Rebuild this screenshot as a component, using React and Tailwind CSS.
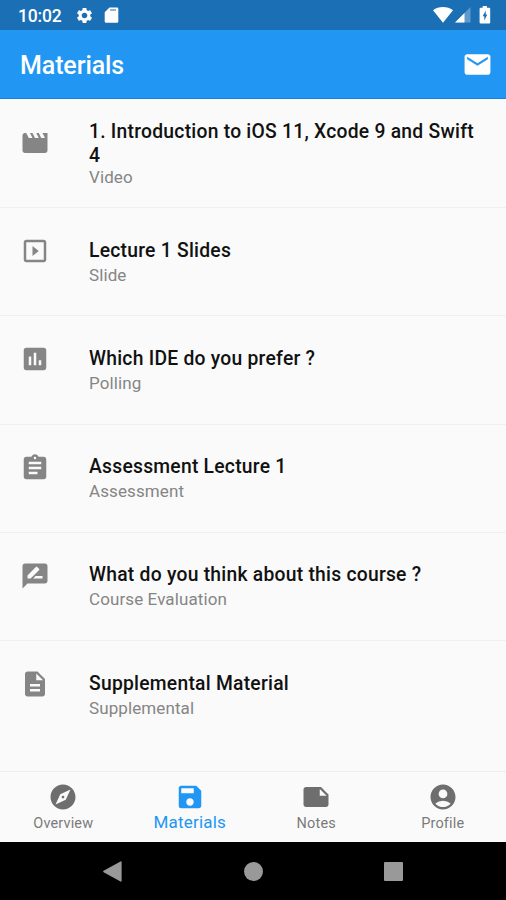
import {
  MdAccountCircle, MdAssignment, MdDescription, MdEmail, MdExplore, MdInsertChart,
  MdMovie, MdNote, MdSave, MdSettings,
} from "react-icons/md";

const SlideIcon = ({ size }) => (
  <svg width={size} height={size} viewBox="0 0 24 24" fill="currentColor">
    <path d="M10 8v8l5-4-5-4zm9-5H5c-1.1 0-2 .9-2 2v14c0 1.1.9 2 2 2h14c1.1 0 2-.9 2-2V5c0-1.1-.9-2-2-2zm0 16H5V5h14v14z" />
  </svg>
);

const ReviewIcon = ({ size }) => (
  <svg width={size} height={size} viewBox="0 0 24 24" fill="currentColor">
    <path d="M20 2H4c-1.1 0-1.99.9-1.99 2L2 22l4-4h14c1.1 0 2-.9 2-2V4c0-1.1-.9-2-2-2zM6 14v-2.47l6.88-6.88c.2-.2.51-.2.71 0l1.77 1.77c.2.2.2.51 0 .71L8.47 14H6zm12 0h-7.5l2-2H18v2z" />
  </svg>
);

const MATERIALS = [
  { title: "1. Introduction to iOS 11, Xcode 9 and Swift 4", type: "Video", icon: MdMovie, twoLine: true },
  { title: "Lecture 1 Slides", type: "Slide", icon: SlideIcon },
  { title: "Which IDE do you prefer ?", type: "Polling", icon: MdInsertChart },
  { title: "Assessment Lecture 1", type: "Assessment", icon: MdAssignment },
  { title: "What do you think about this course ?", type: "Course Evaluation", icon: ReviewIcon },
  { title: "Supplemental Material", type: "Supplemental", icon: MdDescription },
];

const TABS = [
  { label: "Overview", icon: MdExplore },
  { label: "Materials", icon: MdSave, active: true },
  { label: "Notes", icon: MdNote },
  { label: "Profile", icon: MdAccountCircle },
];

function StatusBar() {
  return (
    <div className="flex h-[30px] items-center bg-[#1a6fb5] pl-[18px] pr-[15px] text-white">
      <span className="w-[57px] pt-[3px] text-[17.5px] font-medium leading-none tracking-[-0.2px]">10:02</span>
      <MdSettings size={19} />
      <svg className="ml-[9px]" width="16" height="18" viewBox="0 0 16 18" fill="currentColor">
        <path fillRule="evenodd" d="M6.5 1.5H14q1.3 0 1.3 1.3v12.6q0 1.3-1.3 1.3H3q-1.3 0-1.3-1.3V6.3zM7 3.4v1.2h6V3.4z" />
      </svg>
      <div className="ml-auto flex items-center">
        <svg width="20" height="16" viewBox="0 0 20 16" fill="currentColor">
          <path d="M0 3.3Q4.4 0 10 0t10 3.3L10 15.7z" />
        </svg>
        <svg className="ml-[2px]" width="16" height="16" viewBox="0 0 16 16" fill="currentColor">
          <path opacity=".3" d="M15.5 0v15.5H0z" />
          <path d="M9.5 6v9.5H0z" />
        </svg>
        <svg className="ml-[8px]" width="12" height="18" viewBox="0 0 12 18">
          <path fill="#fff" d="M3.7 0h4.2v1.7h2.3q1 0 1 1V16.5q0 1-1 1H1.6q-1 0-1-1V2.7q0-1 1-1h2.1z" />
          <path fill="#1a6fb5" d="M6.7 4.4v4.2h1.6L5.3 14.4v-4.2H3.7z" />
        </svg>
      </div>
    </div>
  );
}

function MaterialRow({ title, type, icon: Icon, twoLine }) {
  return (
    <div className="flex h-[108.3px] shrink-0 border-b border-[#f0f0f0] px-5 last:border-b-0">
      <div className="w-[69px] shrink-0 pt-[28px] text-[#858585]">
        <Icon size={30} />
      </div>
      <div className={twoLine ? "flex-1 pt-5" : "flex-1 pt-[30.5px]"}>
        <p className="text-[19.3px] font-medium leading-6 tracking-[0.25px] text-[#111]">{title}</p>
        <p className={twoLine ? "-mt-px text-[17px] leading-5 tracking-[0.1px] text-[#858585]" : "text-[17px] leading-6 tracking-[0.1px] text-[#858585]"}>{type}</p>
      </div>
    </div>
  );
}

function TabItem({ label, icon: Icon, active }) {
  return (
    <div className={active ? "flex flex-1 flex-col items-center text-[#2196f3]" : "flex flex-1 flex-col items-center text-[#6e6e6e]"}>
      <Icon size={30} />
      <span className={active ? "text-[17px] leading-5 tracking-[0.2px]" : "pt-[2px] text-[14.5px] leading-5 tracking-[0.15px] text-[#7a7a7a]"}>{label}</span>
    </div>
  );
}

export default function App() {
  return (
    <div className="flex h-[900px] w-[506px] flex-col overflow-hidden bg-[#fafafa] font-['Roboto',sans-serif]">
      <StatusBar />
      <header className="flex h-[69px] shrink-0 items-center justify-between border-b border-[#1583e0] bg-[#2196f3] pl-[20px] pr-[13px] text-white">
        <h1 className="pt-1 text-[25px] font-medium tracking-[-0.1px]">Materials</h1>
        <MdEmail size={31} />
      </header>

      <main className="flex flex-1 flex-col overflow-hidden pt-[0.8px]">
        {MATERIALS.map((m) => (
          <MaterialRow key={m.title} {...m} />
        ))}
      </main>

      <nav className="flex h-[71px] shrink-0 border-t border-[#eeeeee] pt-[10px]">
        {TABS.map((t) => (
          <TabItem key={t.label} {...t} />
        ))}
      </nav>

      {/* Android system buttons */}
      <div className="flex h-[58px] shrink-0 items-center justify-center gap-[121px] bg-black">
        <svg width="20" height="21" viewBox="0 0 20 21" fill="#999">
          <path d="M.6 9.8 17.5.5q1.1-.5 1.1.7v18.6q0 1.2-1.1.7L.6 11.2q-1-.7 0-1.4z" />
        </svg>
        <div className="size-[19px] rounded-full bg-[#999]" />
        <div className="size-[19px] rounded-[1px] bg-[#999]" />
      </div>
    </div>
  );
}
